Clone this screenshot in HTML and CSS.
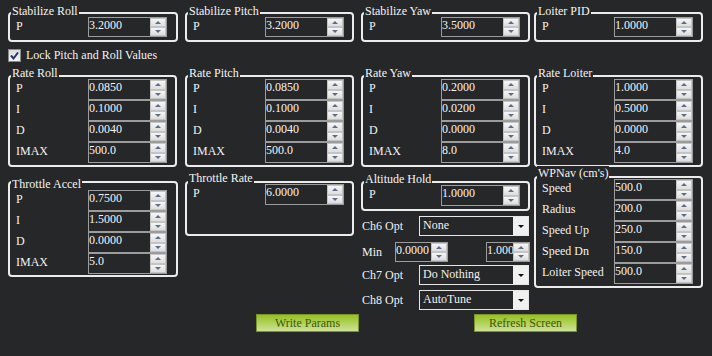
FILE: index.html
```html
<!DOCTYPE html>
<html>
<head>
<meta charset="utf-8">
<link rel="stylesheet" href="styles.css">
</head>
<body>
<div class="page">
  <section class="group stab">
    <div class="title">Stabilize Roll</div>
    <div class="row"><span class="lbl">P</span><div class="num"><span class="val">3.2000</span><span class="spin"><i class="up"></i><i class="dn"></i></span></div></div>
  </section>
  <section class="group stab">
    <div class="title">Stabilize Pitch</div>
    <div class="row"><span class="lbl">P</span><div class="num"><span class="val">3.2000</span><span class="spin"><i class="up"></i><i class="dn"></i></span></div></div>
  </section>
  <section class="group stab">
    <div class="title">Stabilize Yaw</div>
    <div class="row"><span class="lbl">P</span><div class="num"><span class="val">3.5000</span><span class="spin"><i class="up"></i><i class="dn"></i></span></div></div>
  </section>
  <section class="group stab">
    <div class="title">Loiter PID</div>
    <div class="row"><span class="lbl">P</span><div class="num"><span class="val">1.0000</span><span class="spin"><i class="up"></i><i class="dn"></i></span></div></div>
  </section>

  <label class="check">
    <span class="box"><svg width="11" height="11" viewBox="0 0 11 11"><path d="M2 5.5 L4.5 8.5 L9 2.5" fill="none" stroke="#24346e" stroke-width="2"/></svg></span>
    <span>Lock Pitch and Roll Values</span>
  </label>

  <section class="group rate">
    <div class="title">Rate Roll</div>
    <div class="row"><span class="lbl">P</span><div class="num"><span class="val">0.0850</span><span class="spin"><i class="up"></i><i class="dn"></i></span></div></div>
    <div class="row"><span class="lbl">I</span><div class="num"><span class="val">0.1000</span><span class="spin"><i class="up"></i><i class="dn"></i></span></div></div>
    <div class="row"><span class="lbl">D</span><div class="num"><span class="val">0.0040</span><span class="spin"><i class="up"></i><i class="dn"></i></span></div></div>
    <div class="row"><span class="lbl">IMAX</span><div class="num"><span class="val">500.0</span><span class="spin"><i class="up"></i><i class="dn"></i></span></div></div>
  </section>
  <section class="group rate">
    <div class="title">Rate Pitch</div>
    <div class="row"><span class="lbl">P</span><div class="num"><span class="val">0.0850</span><span class="spin"><i class="up"></i><i class="dn"></i></span></div></div>
    <div class="row"><span class="lbl">I</span><div class="num"><span class="val">0.1000</span><span class="spin"><i class="up"></i><i class="dn"></i></span></div></div>
    <div class="row"><span class="lbl">D</span><div class="num"><span class="val">0.0040</span><span class="spin"><i class="up"></i><i class="dn"></i></span></div></div>
    <div class="row"><span class="lbl">IMAX</span><div class="num"><span class="val">500.0</span><span class="spin"><i class="up"></i><i class="dn"></i></span></div></div>
  </section>
  <section class="group rate">
    <div class="title">Rate Yaw</div>
    <div class="row"><span class="lbl">P</span><div class="num"><span class="val">0.2000</span><span class="spin"><i class="up"></i><i class="dn"></i></span></div></div>
    <div class="row"><span class="lbl">I</span><div class="num"><span class="val">0.0200</span><span class="spin"><i class="up"></i><i class="dn"></i></span></div></div>
    <div class="row"><span class="lbl">D</span><div class="num"><span class="val">0.0000</span><span class="spin"><i class="up"></i><i class="dn"></i></span></div></div>
    <div class="row"><span class="lbl">IMAX</span><div class="num"><span class="val">8.0</span><span class="spin"><i class="up"></i><i class="dn"></i></span></div></div>
  </section>
  <section class="group rate">
    <div class="title">Rate Loiter</div>
    <div class="row"><span class="lbl">P</span><div class="num"><span class="val">1.0000</span><span class="spin"><i class="up"></i><i class="dn"></i></span></div></div>
    <div class="row"><span class="lbl">I</span><div class="num"><span class="val">0.5000</span><span class="spin"><i class="up"></i><i class="dn"></i></span></div></div>
    <div class="row"><span class="lbl">D</span><div class="num"><span class="val">0.0000</span><span class="spin"><i class="up"></i><i class="dn"></i></span></div></div>
    <div class="row"><span class="lbl">IMAX</span><div class="num"><span class="val">4.0</span><span class="spin"><i class="up"></i><i class="dn"></i></span></div></div>
  </section>

  <section class="group taccel">
    <div class="title">Throttle Accel</div>
    <div class="row"><span class="lbl">P</span><div class="num"><span class="val">0.7500</span><span class="spin"><i class="up"></i><i class="dn"></i></span></div></div>
    <div class="row"><span class="lbl">I</span><div class="num"><span class="val">1.5000</span><span class="spin"><i class="up"></i><i class="dn"></i></span></div></div>
    <div class="row"><span class="lbl">D</span><div class="num"><span class="val">0.0000</span><span class="spin"><i class="up"></i><i class="dn"></i></span></div></div>
    <div class="row"><span class="lbl">IMAX</span><div class="num"><span class="val">5.0</span><span class="spin"><i class="up"></i><i class="dn"></i></span></div></div>
  </section>
  <section class="group trate">
    <div class="title">Throttle Rate</div>
    <div class="row"><span class="lbl">P</span><div class="num"><span class="val">6.0000</span><span class="spin"><i class="up"></i><i class="dn"></i></span></div></div>
  </section>
  <div class="col3">
    <section class="group alt">
      <div class="title">Altitude Hold</div>
      <div class="row"><span class="lbl">P</span><div class="num"><span class="val">1.0000</span><span class="spin"><i class="up"></i><i class="dn"></i></span></div></div>
    </section>
    <div class="opt ch6"><span class="olbl">Ch6 Opt</span><div class="sel"><span class="stext">None</span><span class="arr"></span></div></div>
    <div class="opt min"><span class="mlbl">Min</span><div class="num small"><span class="val">0.0000</span><span class="spin"><i class="up"></i><i class="dn"></i></span></div><div class="num tiny"><span class="val">1.000</span><span class="spin"><i class="up"></i><i class="dn"></i></span></div></div>
    <div class="opt ch7"><span class="olbl">Ch7 Opt</span><div class="sel"><span class="stext">Do Nothing</span><span class="arr"></span></div></div>
    <div class="opt ch8"><span class="olbl">Ch8 Opt</span><div class="sel"><span class="stext">AutoTune</span><span class="arr"></span></div></div>
  </div>
  <section class="group wpnav">
    <div class="title">WPNav (cm's)</div>
    <div class="row"><span class="lbl">Speed</span><div class="num"><span class="val">500.0</span><span class="spin"><i class="up"></i><i class="dn"></i></span></div></div>
    <div class="row"><span class="lbl">Radius</span><div class="num"><span class="val">200.0</span><span class="spin"><i class="up"></i><i class="dn"></i></span></div></div>
    <div class="row"><span class="lbl">Speed Up</span><div class="num"><span class="val">250.0</span><span class="spin"><i class="up"></i><i class="dn"></i></span></div></div>
    <div class="row"><span class="lbl">Speed Dn</span><div class="num"><span class="val">150.0</span><span class="spin"><i class="up"></i><i class="dn"></i></span></div></div>
    <div class="row"><span class="lbl">Loiter Speed</span><div class="num"><span class="val">500.0</span><span class="spin"><i class="up"></i><i class="dn"></i></span></div></div>
  </section>

  <div class="btns">
    <button class="btn">Write Params</button>
    <button class="btn">Refresh Screen</button>
  </div>
</div>
</body>
</html>
```

FILE: styles.css
```css
* { box-sizing: border-box; }

html, body {
  margin: 0;
  background: #262728;
}

body {
  width: 712px;
  height: 356px;
  overflow: hidden;
  font-family: "Liberation Serif", "Times New Roman", serif;
  font-size: 12px;
  color: #f2f2f2;
}

.page {
  display: grid;
  grid-template-columns: 177px 176px 173px 169px;
  align-items: start;
  padding: 12px 0 0 8px;
}

.group {
  border: 2px solid #ececec;
  border-radius: 4px;
  width: 169px;
}

.page > .group:first-child,
.rate:nth-of-type(1) { width: 170px; }

.title {
  width: max-content;
  margin: -13px 0 -1px 1px;
  padding: 0 1px;
  height: 14px;
  line-height: 14px;
  background: #262728;
  color: #f4f4f4;
}

.row {
  display: flex;
  align-items: flex-start;
  height: 21px;
}

.lbl {
  width: 78px;
  padding: 2px 0 0 6px;
  line-height: 14px;
  white-space: nowrap;
}

.num {
  display: flex;
  height: 21px;
  border: 1px solid #9c9c9c;
  background: #262728;
}

.val {
  width: 61px;
  overflow: hidden;
  white-space: nowrap;
  line-height: 13px;
  padding-top: 1px;
  color: #f6f6f6;
}

.spin {
  width: 16px;
  display: flex;
  flex-direction: column;
}

.spin i {
  flex: 1;
  display: flex;
  align-items: center;
  justify-content: center;
  background: linear-gradient(#f6f6f6, #dedede);
  border: 1px solid #c4c4c4;
}

.spin i::before {
  content: "";
  border-left: 3px solid transparent;
  border-right: 3px solid transparent;
}

.spin .up::before { border-bottom: 3px solid #5e6c8c; }
.spin .dn::before { border-top: 3px solid #5e6c8c; }

.stab { padding: 3px 0 3px; }
.stab .row, .stab .num { height: 20px; }

.check {
  grid-column: 1 / -1;
  display: flex;
  align-items: center;
  gap: 5px;
  margin-top: 6px;
  height: 14px;
  line-height: 14px;
}

.box {
  width: 13px;
  height: 13px;
  border: 1px solid #8a8a8a;
  background: linear-gradient(#dcdcdc, #f4f4f4);
  display: flex;
  align-items: center;
  justify-content: center;
}

.rate {
  margin-top: 13px;
  padding: 2px 0 2px;
}

.taccel {
  width: 170px;
  margin-top: 14px;
  padding: 7px 0 1px;
}

.trate {
  margin-top: 14px;
  height: 55px;
  padding-top: 1px;
}

.col3 {
  display: flex;
  flex-direction: column;
  margin-top: 14px;
}

.alt { padding: 2px 0 3px; }

.opt {
  display: flex;
  align-items: center;
  height: 20px;
}

.ch6 { margin-top: 5px; }
.min { margin-top: 6px; }
.ch7 { margin-top: 3px; }
.ch8 { margin-top: 5px; }

.olbl {
  width: 58px;
  padding-left: 1px;
}

.mlbl {
  width: 34px;
  padding-left: 1px;
}

.num.small { height: 20px; }
.num.small .val { width: 35px; }

.num.tiny {
  height: 20px;
  margin-left: 38px;
}
.num.tiny .val { width: 26px; }

.sel {
  display: flex;
  width: 110px;
  height: 20px;
  border: 1px solid #e6e6e6;
  background: #262728;
}

.stext {
  flex: 1;
  padding-left: 3px;
  line-height: 17px;
}

.arr {
  width: 15px;
  display: flex;
  align-items: center;
  justify-content: center;
  background: #f0f0f0;
}

.arr::before {
  content: "";
  border-left: 3px solid transparent;
  border-right: 3px solid transparent;
  border-top: 3px solid #111;
}

.wpnav {
  margin-top: 9px;
  padding: 1px 0 2px;
}

.btns {
  grid-column: 1 / -1;
  display: flex;
  gap: 115px;
  margin-top: 4px;
  padding-left: 248px;
}

.btn {
  width: 103px;
  height: 18px;
  padding: 0;
  border: 1px solid #799429;
  background: linear-gradient(#94c11f, #cde296);
  color: #415704;
  font-family: "Liberation Serif", "Times New Roman", serif;
  font-size: 12px;
  line-height: 16px;
  text-align: center;
}
```
